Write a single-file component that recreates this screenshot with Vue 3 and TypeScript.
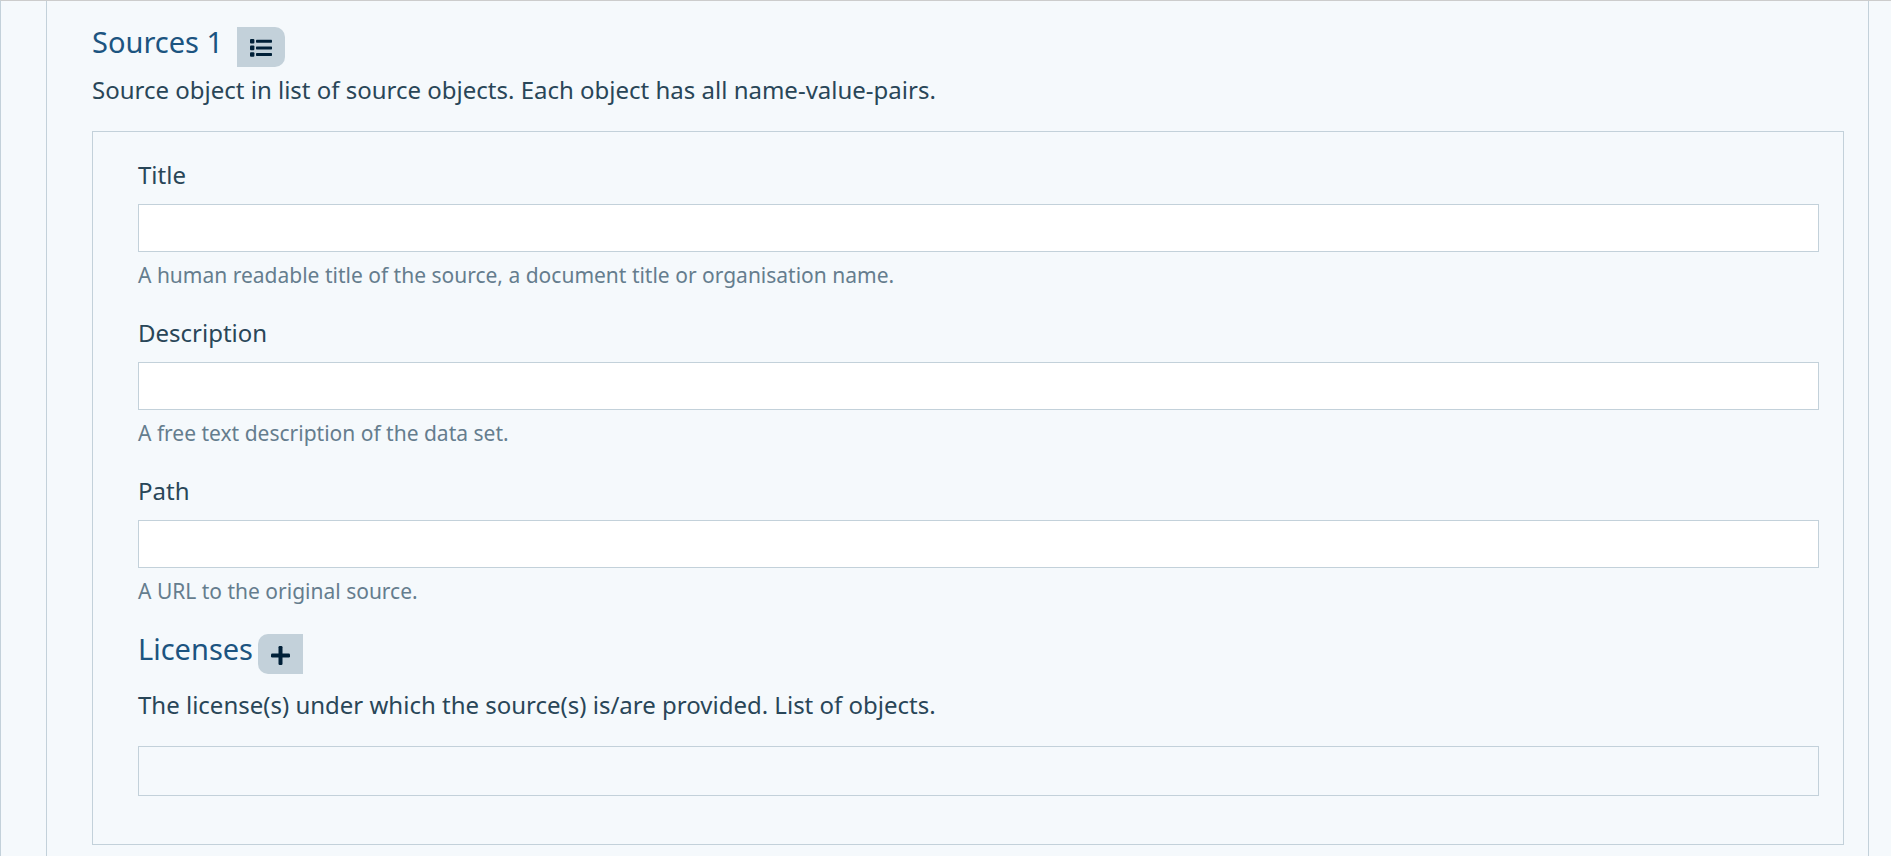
<script setup lang="ts">
import { reactive } from 'vue'

interface Field {
  key: 'title' | 'description' | 'path'
  label: string
  help: string
}

const fields: Field[] = [
  {
    key: 'title',
    label: 'Title',
    help: 'A human readable title of the source, a document title or organisation name.',
  },
  { key: 'description', label: 'Description', help: 'A free text description of the data set.' },
  { key: 'path', label: 'Path', help: 'A URL to the original source.' },
]

const values = reactive({ title: '', description: '', path: '' })
</script>

<template>
  <main class="page">
    <form class="sources" @submit.prevent>
      <div class="heading">
        <h2>Sources 1</h2>
        <button type="button" class="action action-list" aria-label="Show list">
          <svg width="22" height="18" viewBox="0 0 22 18" aria-hidden="true">
            <rect x="0" y="0" width="4.4" height="4.6" rx="1" />
            <rect x="0" y="6.6" width="4.4" height="4.6" rx="1" />
            <rect x="0" y="13.2" width="4.4" height="4.6" rx="1" />
            <rect x="6" y="0.8" width="16" height="3" rx="0.7" />
            <rect x="6" y="7.4" width="16" height="3" rx="0.7" />
            <rect x="6" y="14" width="16" height="3" rx="0.7" />
          </svg>
        </button>
      </div>
      <p class="lead">Source object in list of source objects. Each object has all name-value-pairs.</p>

      <section class="panel">
        <div v-for="field in fields" :key="field.key" class="field">
          <label :for="field.key">{{ field.label }}</label>
          <input :id="field.key" v-model="values[field.key]" type="text" :aria-describedby="`${field.key}-help`" />
          <small :id="`${field.key}-help`">{{ field.help }}</small>
        </div>

        <div class="heading heading-licenses">
          <h2>Licenses</h2>
          <button type="button" class="action action-add" aria-label="Add license">
            <svg width="19" height="19" viewBox="0 0 19 19" aria-hidden="true">
              <rect x="0" y="7.5" width="19" height="4" rx="1.2" />
              <rect x="7.5" y="0" width="4" height="19" rx="1.2" />
            </svg>
          </button>
        </div>
        <p class="lead">The license(s) under which the source(s) is/are provided. List of objects.</p>
        <div class="license-list"></div>
      </section>
    </form>
  </main>
</template>

<style>
body {
  margin: 0;
  background: #f5f9fc;
}
</style>

<style scoped>
.page {
  box-sizing: border-box;
  display: flex;
  min-height: 100vh;
  padding: 0 22px 0 45px;
  border-top: 1px solid #ccc;
  border-left: 1px solid #c3d1da;
  background: #f5f9fc;
  color: #294658;
  font-family: "Segoe UI", "Noto Sans", "Open Sans", sans-serif;
  font-size: 24px;
  line-height: 36px;
}

.sources {
  flex: 1;
  min-width: 0;
  padding: 23px 24px 0 45px;
  border: solid #c3d1da;
  border-width: 0 1px;
}

.heading {
  display: flex;
  align-items: flex-end;
  gap: 14px;
  margin-bottom: 5px;
}

.heading-licenses {
  gap: 5px;
  margin-bottom: 13px;
}

h2 {
  margin: 0;
  padding-bottom: 7px;
  color: #1c5480;
  font-size: 29px;
  font-weight: 400;
  line-height: 36px;
}

.action {
  display: flex;
  align-items: center;
  justify-content: center;
  height: 40px;
  padding: 2px 0 0;
  border: 0;
  background: #c3d1da;
  color: #002038;
  cursor: pointer;
}

.action svg {
  fill: currentColor;
}

.action-list {
  width: 48px;
  border-radius: 0 10px 10px 0;
}

.action-add {
  width: 45px;
  border-radius: 10px 0 0 10px;
}

.lead {
  margin: 0 0 23px;
}

.panel {
  padding: 25px 24px 48px 45px;
  border: 1px solid #c3d1da;
}

.field {
  display: flex;
  flex-direction: column;
  margin-bottom: 24px;
}

label {
  align-self: flex-start;
  margin-bottom: 11px;
}

input {
  box-sizing: border-box;
  width: 100%;
  height: 48px;
  padding: 0 12px;
  border: 1px solid #c3d1da;
  border-radius: 0;
  background: #fff;
  color: inherit;
  font: inherit;
}

small {
  margin-top: 7px;
  color: #657d8e;
  font-size: 21px;
  line-height: 32px;
}

.license-list {
  height: 48px;
  border: 1px solid #c3d1da;
}
</style>
